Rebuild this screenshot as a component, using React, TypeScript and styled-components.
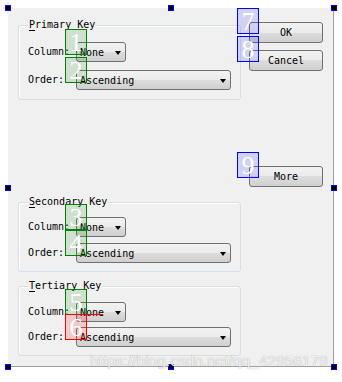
import React from "react";
import styled, { createGlobalStyle } from "styled-components";

const GlobalStyle = createGlobalStyle`
  html, body { margin: 0; padding: 0; background: #ffffff; }
  body { font-family: "DejaVu Sans Mono", "Liberation Mono", monospace; font-size: 10px; color: #000; }
  * { box-sizing: border-box; }
`;

const Page = styled.div`
  position: relative;
  width: 342px;
  height: 382px;
  padding: 8px 0 0 8px;
  overflow: hidden;
`;

const FormFrame = styled.div`
  position: relative;
  width: 326px;
  height: 359px;
`;

const Form = styled.div`
  width: 100%;
  height: 100%;
  background: #f0f0f0;
  border-right: 1px solid #a0a0a0;
  border-bottom: 1px solid #a0a0a0;
  overflow: hidden;
  display: flex;
  align-items: flex-start;
  padding-left: 10px;
`;

const LeftColumn = styled.div`
  width: 223px;
  display: flex;
  flex-direction: column;
  padding-top: 17px;
`;

const RightColumn = styled.div`
  margin-left: 8px;
  width: 74px;
  display: flex;
  flex-direction: column;
  padding-top: 14px;
`;

const Group = styled.div<{ $h: number; $pt: number; $gap: number; $mb: number }>`
  position: relative;
  height: ${(p) => p.$h}px;
  margin-bottom: ${(p) => p.$mb}px;
  border: 1px solid #d5dfe5;
  border-radius: 3px;
  box-shadow: inset 1px 1px 0 #ffffff;
  padding: ${(p) => p.$pt}px 0 0 9px;
  display: grid;
  grid-template-columns: 42px auto;
  column-gap: 6px;
  row-gap: ${(p) => p.$gap}px;
  align-content: start;
  justify-items: start;
  align-items: center;
`;

const Legend = styled.div`
  position: absolute;
  left: 9px;
  top: -7px;
  padding: 0 1px 0 1px;
  background: #f0f0f0;
  line-height: 12px;
  white-space: nowrap;
`;

const Mnemonic = styled.span`
  text-decoration: underline;
  text-underline-offset: 2px;
`;

const Label = styled.span`
  white-space: nowrap;
  line-height: 12px;
`;

const ComboWrap = styled.div`
  position: relative;
`;

const Combo = styled.div<{ $w: number }>`
  width: ${(p) => p.$w}px;
  height: 20px;
  border: 1px solid #707070;
  border-radius: 3px;
  background: linear-gradient(#f2f2f2 0%, #ebebeb 50%, #dddddd 50%, #cfcfcf 100%);
  display: flex;
  align-items: center;
  justify-content: space-between;
  padding: 0 4px 0 3px;
  white-space: nowrap;
`;

const Arrow = styled.span`
  width: 0;
  height: 0;
  border-left: 3.5px solid transparent;
  border-right: 3.5px solid transparent;
  border-top: 4px solid #000;
  margin-top: 1px;
`;

const Button = styled.div<{ $mt: number }>`
  position: relative;
  margin-top: ${(p) => p.$mt}px;
  width: 74px;
  height: 21px;
  border: 1px solid #707070;
  border-radius: 3px;
  background: linear-gradient(#f2f2f2 0%, #ebebeb 50%, #dddddd 50%, #cfcfcf 100%);
  display: flex;
  align-items: center;
  justify-content: center;
  white-space: nowrap;
`;

const markerColors = {
  green: { line: "#008000", fill: "rgba(0, 128, 0, 0.14)" },
  blue: { line: "#0000ff", fill: "rgba(0, 0, 255, 0.13)" },
  red: { line: "#ff0000", fill: "rgba(255, 0, 0, 0.16)" },
};

type Tone = keyof typeof markerColors;

const Marker = styled.div<{ $tone: Tone; $dx: number; $dy: number }>`
  position: absolute;
  z-index: 3;
  left: ${(p) => p.$dx}px;
  top: ${(p) => p.$dy}px;
  width: 22px;
  height: 26px;
  border: 1px solid ${(p) => markerColors[p.$tone].line};
  background: ${(p) => markerColors[p.$tone].fill};
  color: #ffffff;
  font-family: "Liberation Serif", serif;
  font-size: 26px;
  line-height: 25px;
  text-align: center;
`;

const TrailLine = styled.div`
  position: absolute;
  left: -1px;
  top: -1px;
  width: 38px;
  height: 1px;
  background: #ff0000;
`;

const Handle = styled.div<{ $x: string; $y: string }>`
  position: absolute;
  z-index: 4;
  left: ${(p) => p.$x};
  top: ${(p) => p.$y};
  width: 6px;
  height: 6px;
  background: #000;
  border: 1px solid #0000ff;
`;

const Watermark = styled.div`
  position: absolute;
  z-index: 5;
  left: 90px;
  top: 352px;
  font-family: "Liberation Sans", Arial, sans-serif;
  font-size: 15.5px;
  color: rgba(255, 255, 255, 0.85);
  text-shadow: 0 0 1px rgba(110, 110, 110, 0.7);
  white-space: nowrap;
`;

type KeyGroupProps = {
  title: string;
  h: number;
  pt: number;
  gap: number;
  mb: number;
  m1: { n: number; tone: Tone };
  m2: { n: number; tone: Tone; trail?: boolean };
};

function KeyGroup({ title, h, pt, gap, mb, m1, m2 }: KeyGroupProps) {
  return (
    <Group $h={h} $pt={pt} $gap={gap} $mb={mb}>
      <Legend>
        <Mnemonic>{title[0]}</Mnemonic>
        {title.slice(1)}
      </Legend>
      <Label>Column:</Label>
      <ComboWrap>
        <Combo $w={50}>
          <span>None</span>
          <Arrow />
        </Combo>
        <Marker $tone={m1.tone} $dx={-11} $dy={-13}>
          {m1.n}
        </Marker>
      </ComboWrap>
      <Label>Order:</Label>
      <ComboWrap>
        <Combo $w={155}>
          <span>Ascending</span>
          <Arrow />
        </Combo>
        <Marker $tone={m2.tone} $dx={-11} $dy={-13}>
          {m2.n}
          {m2.trail && <TrailLine />}
        </Marker>
      </ComboWrap>
    </Group>
  );
}

const handles: Array<[string, string]> = [
  ["-3px", "-3px"],
  ["calc(50% - 3px)", "-3px"],
  ["calc(100% - 3px)", "-3px"],
  ["-3px", "calc(50% - 3px)"],
  ["calc(100% - 3px)", "calc(50% - 3px)"],
  ["-3px", "calc(100% - 3px)"],
  ["calc(50% - 3px)", "calc(100% - 3px)"],
  ["calc(100% - 3px)", "calc(100% - 3px)"],
];

export default function App() {
  return (
    <Page>
      <GlobalStyle />
      <FormFrame>
        <Form>
          <LeftColumn>
            <KeyGroup
              title="Primary Key"
              h={75}
              pt={16}
              gap={8}
              mb={102}
              m1={{ n: 1, tone: "green" }}
              m2={{ n: 2, tone: "green" }}
            />
            <KeyGroup
              title="Secondary Key"
              h={70}
              pt={14}
              gap={6}
              mb={14}
              m1={{ n: 3, tone: "green" }}
              m2={{ n: 4, tone: "green" }}
            />
            <KeyGroup
              title="Tertiary Key"
              h={70}
              pt={15}
              gap={5}
              mb={0}
              m1={{ n: 5, tone: "green" }}
              m2={{ n: 6, tone: "red", trail: true }}
            />
          </LeftColumn>
          <RightColumn>
            <Button $mt={0}>
              OK
              <Marker $tone="blue" $dx={-13} $dy={-15}>
                7
              </Marker>
            </Button>
            <Button $mt={7}>
              Cancel
              <Marker $tone="blue" $dx={-13} $dy={-15}>
                8
              </Marker>
            </Button>
            <Button $mt={95}>
              More
              <Marker $tone="blue" $dx={-13} $dy={-15}>
                9
              </Marker>
            </Button>
          </RightColumn>
        </Form>
        {handles.map(([x, y], i) => (
          <Handle key={i} $x={x} $y={y} />
        ))}
      </FormFrame>
      <Watermark>https://blog.csdn.net/qq_42956179</Watermark>
    </Page>
  );
}
